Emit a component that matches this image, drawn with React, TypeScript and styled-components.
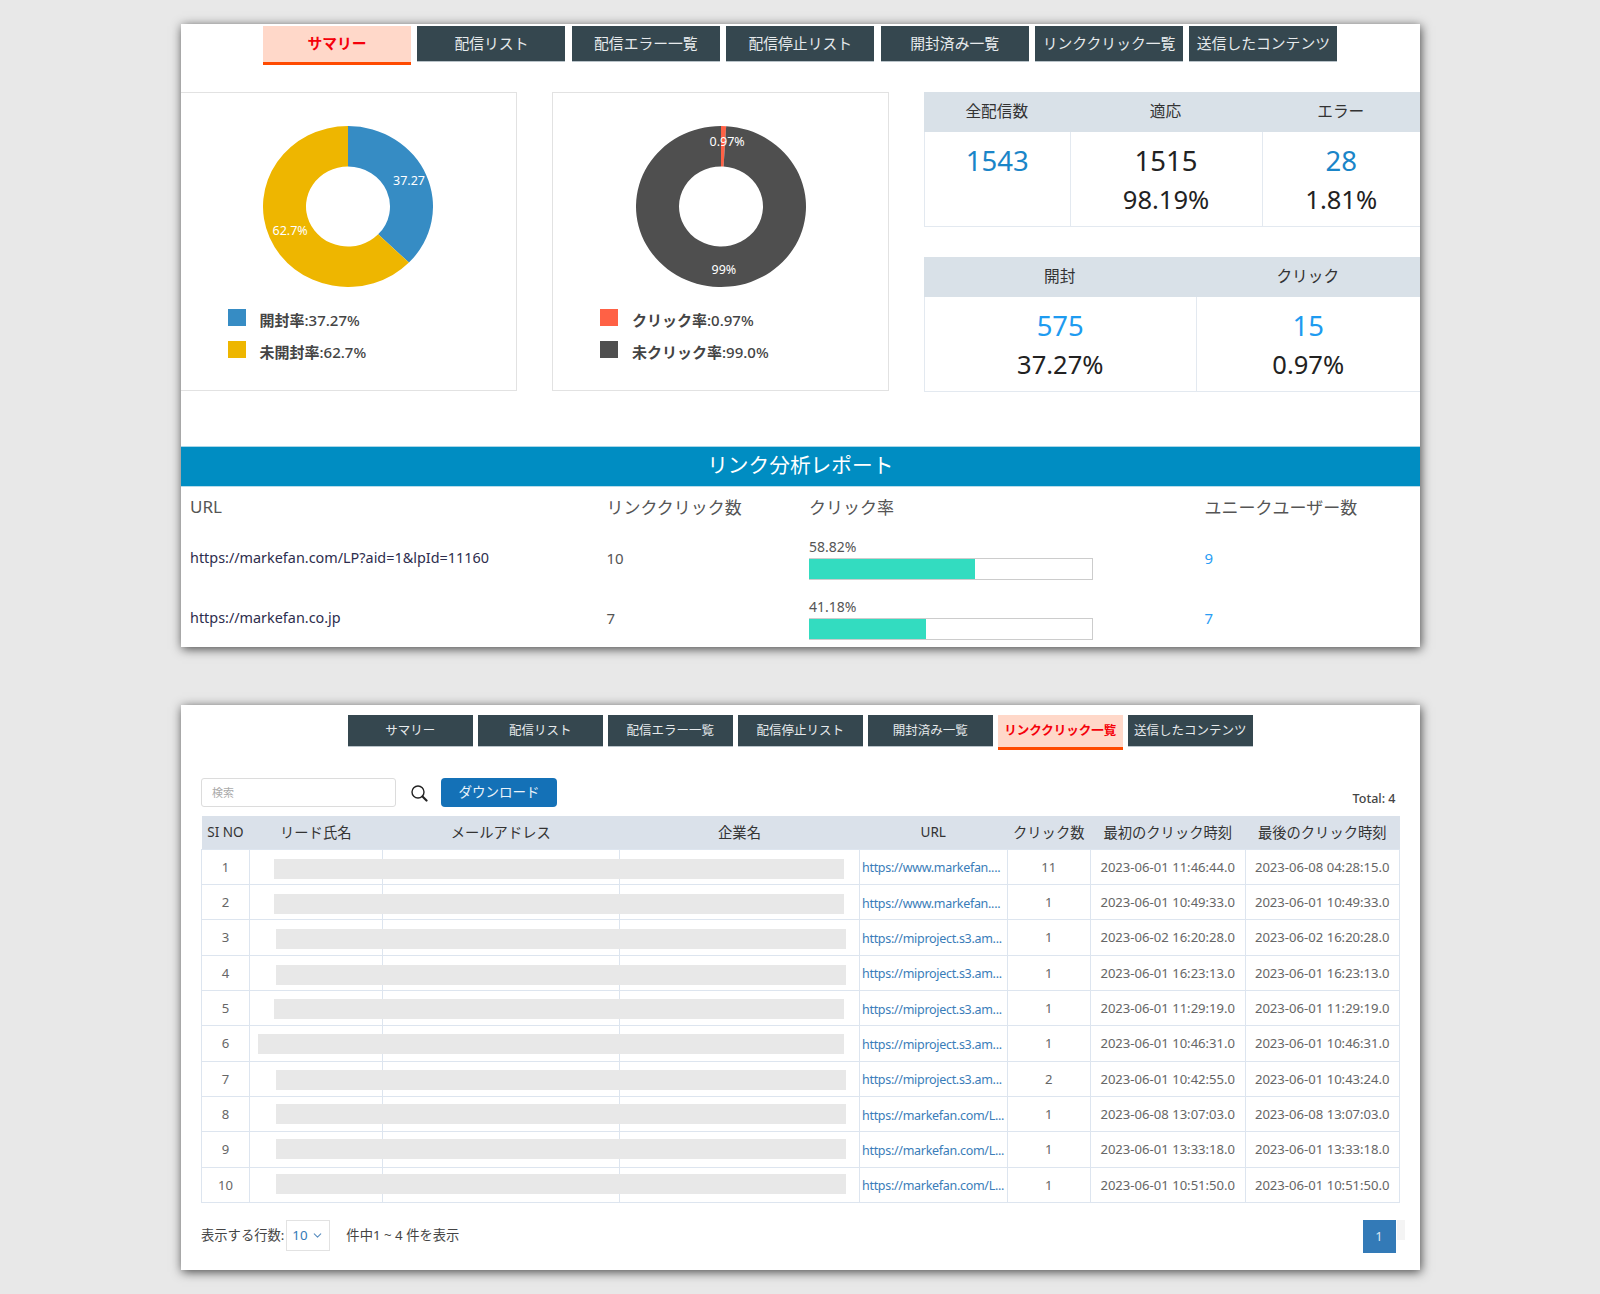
import React from "react";
import styled, { createGlobalStyle } from "styled-components";
import { ChevronDown } from "lucide-react";

const GlobalStyle = createGlobalStyle`
  html, body {
    margin: 0;
    padding: 0;
    background: #e8e8e8;
  }
  body {
    font-family: "Noto Sans", "Noto Sans CJK JP", sans-serif;
    color: #333;
  }
`;

const Page = styled.div`
  width: 1600px;
  height: 1294px;
  padding: 24px 0 0 180.5px;
  box-sizing: border-box;
  display: flex;
  flex-direction: column;
  gap: 58px;
  overflow: hidden;
`;

const Card = styled.section<{ $height: number }>`
  width: 1239.5px;
  height: ${({ $height }) => $height}px;
  background: #fff;
  box-shadow: 1px 2px 10px rgba(0, 0, 0, 0.7);
  overflow: hidden;
`;

const TabBar = styled.nav<{ $gap: number; $height: number; $top: number }>`
  display: flex;
  justify-content: center;
  align-items: flex-start;
  gap: ${({ $gap }) => $gap}px;
  height: ${({ $height }) => $height}px;
  padding-top: ${({ $top }) => $top}px;
  box-sizing: border-box;
`;

const Tab = styled.div<{ $active?: boolean; $width: number; $height: number; $size: number }>`
  width: ${({ $width }) => $width}px;
  height: ${({ $height, $active }) => ($active ? $height + 3 : $height)}px;
  box-sizing: border-box;
  padding-bottom: 3px;
  display: flex;
  align-items: center;
  justify-content: center;
  white-space: nowrap;
  font-size: ${({ $size }) => $size}px;
  font-weight: ${({ $active }) => ($active ? 700 : 400)};
  background: ${({ $active }) => ($active ? "#ffd8c9" : "#35474f")};
  color: ${({ $active }) => ($active ? "#f5000a" : "#e6eaec")};
  border-bottom: ${({ $active }) => ($active ? "3px solid #ff4a00" : "1px solid #b9c3c9")};
`;

const SummaryGrid = styled.div`
  display: grid;
  grid-template-columns: 336.5px 337px 1fr;
  column-gap: 35px;
  align-items: start;
`;

const ChartPanel = styled.div<{ $open?: boolean }>`
  height: 299px;
  box-sizing: border-box;
  border: 1px solid #e2e2e2;
  border-left: ${({ $open }) => ($open ? "0" : "1px solid #e2e2e2")};
  padding-top: 33px;
`;

const Donut = styled.svg`
  display: block;
  width: 170px;
  height: 161px;
  margin: 0 auto;
`;

const DonutLabel = styled.text`
  fill: #fff;
  font-size: 12.5px;
  font-family: "Noto Sans", sans-serif;
`;

const Legend = styled.ul`
  list-style: none;
  margin: 23px 0 0 47px;
  padding: 0;
  display: flex;
  flex-direction: column;
  gap: 14.6px;
`;

const LegendItem = styled.li`
  display: flex;
  align-items: center;
  height: 18px;
  gap: 14px;
  font-size: 15px;
  font-weight: 500;
  color: #444;
`;

const Swatch = styled.span<{ $color: string }>`
  width: 18px;
  height: 17px;
  background: ${({ $color }) => $color};
  margin-top: -3.5px;
`;

const LegendName = styled.b`
  font-weight: 700;
`;

const StatColumn = styled.div`
  display: flex;
  flex-direction: column;
  gap: 30px;
`;

const StatTable = styled.div<{ $cols: string }>`
  display: grid;
  grid-template-columns: ${({ $cols }) => $cols};
`;

const StatHead = styled.div`
  height: 40px;
  box-sizing: border-box;
  padding-bottom: 4px;
  display: flex;
  align-items: center;
  justify-content: center;
  background: #d9e1e8;
  font-size: 15.7px;
  color: #333;
`;

const StatCell = styled.div`
  height: 95px;
  box-sizing: border-box;
  padding-top: 10px;
  border-left: 1px solid #e3e9f0;
  border-bottom: 1px solid #e3e9f0;
  text-align: center;
  font-size: 25.5px;
  line-height: 38px;
  color: #222;
`;

const StatValue = styled.div<{ $color?: string }>`
  font-size: 27.5px;
  color: ${({ $color }) => $color || "#222"};
`;

const ReportBanner = styled.h2`
  margin: 54px 0 0;
  height: 41px;
  box-sizing: border-box;
  padding-bottom: 5px;
  display: flex;
  align-items: center;
  justify-content: center;
  background: #008dc2;
  border-top: 1px solid #a9d6e8;
  border-bottom: 1px solid #b7dcea;
  color: #fff;
  font-size: 20.7px;
  font-weight: 400;
`;

const LinkRow = styled.div<{ $height: number }>`
  display: grid;
  grid-template-columns: 416.5px 202.5px 395.5px 1fr;
  align-items: center;
  height: ${({ $height }) => $height}px;
  box-sizing: border-box;
  padding: 0 0 3px 9.5px;
  font-size: 15px;
  color: #555;
`;

const LinkHeadCell = styled.div`
  font-size: 17px;
  color: #555;
`;

const LinkUrl = styled.span`
  color: #2d2d4d;
  font-size: 14.4px;
`;

const UniqueCount = styled.span`
  color: #2a9df4;
`;

const RateBlock = styled.div`
  margin-top: 5px;
`;

const RateLabel = styled.div`
  font-size: 14px;
  line-height: 14px;
  margin-bottom: 4px;
  color: #555;
`;

const RateTrack = styled.div`
  width: 284px;
  height: 22px;
  box-sizing: border-box;
  border: 1px solid #ccc;
  border-left: 0;
  background: #fff;
`;

const RateFill = styled.div`
  height: 100%;
  background: #33dcc0;
`;

const ListBody = styled.div`
  padding: 0 20.5px;
`;

const Controls = styled.div`
  display: flex;
  align-items: center;
  height: 29px;
  margin-top: 28px;
`;

const SearchInput = styled.input`
  width: 195px;
  height: 29px;
  box-sizing: border-box;
  padding: 0 10px;
  border: 1px solid #dcdcdc;
  border-radius: 3px;
  font-family: inherit;
  font-size: 11px;
  outline: none;
  &::placeholder {
    color: #aaa;
  }
`;

const SearchIcon = styled.svg`
  width: 17px;
  height: 17px;
  margin: 2px 13px 0 15px;
`;

const DownloadButton = styled.button`
  width: 116px;
  height: 29px;
  padding: 0 0 3px;
  border: 0;
  border-radius: 4px;
  background: #1471b7;
  color: #e9f3fa;
  font-family: inherit;
  font-size: 13.5px;
`;

const Total = styled.div`
  margin: 12px 4px 0 auto;
  font-size: 12.5px;
  font-weight: 500;
  color: #444;
`;

const LeadTable = styled.table`
  width: 1198px;
  margin-top: 9px;
  table-layout: fixed;
  border-collapse: collapse;
`;

const HeadCell = styled.th<{ $size?: number }>`
  height: 33px;
  padding: 0 0 ${({ $size }) => ($size ? 0 : 2)}px;
  box-sizing: border-box;
  background: #dae1ea;
  font-size: ${({ $size }) => $size || 14.3}px;
  font-weight: 400;
  color: #333;
  white-space: nowrap;
`;

const Cell = styled.td`
  height: 35.35px;
  box-sizing: border-box;
  padding: 0;
  border: 1px solid #dde5ef;
  text-align: center;
  font-size: 13.1px;
  color: #666;
  white-space: nowrap;
`;

const NameCell = styled(Cell)`
  position: relative;
`;

const UrlCell = styled(Cell)`
  padding: 2px 0 0 2px;
  text-align: left;
  color: #3a7db9;
  font-size: 12.5px;
  letter-spacing: -0.3px;
`;

// redaction bar lying over the name, mail and company columns
const Mask = styled.div<{ $left: number; $top: number; $width: number }>`
  position: absolute;
  left: ${({ $left }) => $left}px;
  top: ${({ $top }) => $top}px;
  width: ${({ $width }) => $width}px;
  height: 20px;
  background: #e8e8e8;
`;

const Footer = styled.div`
  display: flex;
  align-items: flex-start;
  margin-top: 17px;
  font-size: 13.3px;
  color: #444;
`;

const FooterText = styled.span`
  line-height: 31px;
`;

const RowSelect = styled.div`
  width: 44px;
  height: 31px;
  box-sizing: border-box;
  margin: 0 16px 0 2px;
  padding: 0 5px;
  display: flex;
  align-items: center;
  justify-content: space-between;
  border: 1px solid #e2e2e2;
  color: #337ab7;
`;

const Pagination = styled.div`
  margin-left: auto;
  margin-right: -5px;
  display: flex;
  align-items: flex-start;
  gap: 1px;
`;

const PageButton = styled.div`
  width: 33px;
  height: 33px;
  display: flex;
  align-items: center;
  justify-content: center;
  background: #337ab7;
  color: #dbe9f5;
  font-size: 13px;
`;

const PageGhost = styled.div`
  width: 8px;
  height: 20px;
  background: #f4f4f4;
`;

const polar = (cx: number, cy: number, rx: number, ry: number, pct: number) => {
  const a = (pct / 100) * Math.PI * 2;
  return [cx + rx * Math.sin(a), cy - ry * Math.cos(a)];
};

const ringSlice = (from: number, to: number) => {
  const [x1, y1] = polar(85, 80.5, 85, 80.5, from);
  const [x2, y2] = polar(85, 80.5, 85, 80.5, to);
  const [x3, y3] = polar(85, 80.5, 42, 40, to);
  const [x4, y4] = polar(85, 80.5, 42, 40, from);
  const large = to - from > 50 ? 1 : 0;
  return `M${x1} ${y1}A85 80.5 0 ${large} 1 ${x2} ${y2}L${x3} ${y3}A42 40 0 ${large} 0 ${x4} ${y4}Z`;
};

const summaryTabs = ["サマリー", "配信リスト", "配信エラー一覧", "配信停止リスト", "開封済み一覧", "リンククリック一覧", "送信したコンテンツ"];

const leadRows = [
  { url: "https://www.markefan....", clicks: 11, first: "2023-06-01 11:46:44.0", last: "2023-06-08 04:28:15.0", left: 24, top: 9, width: 570 },
  { url: "https://www.markefan....", clicks: 1, first: "2023-06-01 10:49:33.0", last: "2023-06-01 10:49:33.0", left: 24, top: 9, width: 570 },
  { url: "https://miproject.s3.am...", clicks: 1, first: "2023-06-02 16:20:28.0", last: "2023-06-02 16:20:28.0", left: 26, top: 9, width: 570 },
  { url: "https://miproject.s3.am...", clicks: 1, first: "2023-06-01 16:23:13.0", last: "2023-06-01 16:23:13.0", left: 26, top: 9, width: 570 },
  { url: "https://miproject.s3.am...", clicks: 1, first: "2023-06-01 11:29:19.0", last: "2023-06-01 11:29:19.0", left: 24, top: 8, width: 570 },
  { url: "https://miproject.s3.am...", clicks: 1, first: "2023-06-01 10:46:31.0", last: "2023-06-01 10:46:31.0", left: 8, top: 8, width: 586 },
  { url: "https://miproject.s3.am...", clicks: 2, first: "2023-06-01 10:42:55.0", last: "2023-06-01 10:43:24.0", left: 26, top: 8, width: 570 },
  { url: "https://markefan.com/L...", clicks: 1, first: "2023-06-08 13:07:03.0", last: "2023-06-08 13:07:03.0", left: 26, top: 7, width: 570 },
  { url: "https://markefan.com/L...", clicks: 1, first: "2023-06-01 13:33:18.0", last: "2023-06-01 13:33:18.0", left: 26, top: 7, width: 570 },
  { url: "https://markefan.com/L...", clicks: 1, first: "2023-06-01 10:51:50.0", last: "2023-06-01 10:51:50.0", left: 26, top: 6, width: 570 },
];

const linkRows = [
  { url: "https://markefan.com/LP?aid=1&lpId=11160", clicks: 10, rate: 58.82, unique: 9 },
  { url: "https://markefan.co.jp", clicks: 7, rate: 41.18, unique: 7 },
];

const App: React.FC = () => {
  return (
    <Page>
      <GlobalStyle />
      <Card $height={623}>
        <TabBar $gap={6.4} $height={68} $top={2}>
          {summaryTabs.map((name, i) => (
            <Tab key={name} $active={i === 0} $width={148} $height={36} $size={14.8}>
              {name}
            </Tab>
          ))}
        </TabBar>
        <SummaryGrid>
          <ChartPanel $open>
            <Donut viewBox="0 0 170 161">
              <path d={ringSlice(0, 37.27)} fill="#368cc4" />
              <path d={ringSlice(37.27, 100)} fill="#eeb600" />
              <DonutLabel x="130" y="59">37.27</DonutLabel>
              <DonutLabel x="9.5" y="109">62.7%</DonutLabel>
            </Donut>
            <Legend>
              <LegendItem>
                <Swatch $color="#368cc4" />
                <span><LegendName>開封率</LegendName>:37.27%</span>
              </LegendItem>
              <LegendItem>
                <Swatch $color="#eeb600" />
                <span><LegendName>未開封率</LegendName>:62.7%</span>
              </LegendItem>
            </Legend>
          </ChartPanel>
          <ChartPanel>
            <Donut viewBox="0 0 170 161">
              <path d={ringSlice(0, 0.97)} fill="#ff6145" />
              <path d={ringSlice(0.97, 100)} fill="#4f4f4f" />
              <DonutLabel x="73.5" y="19.5">0.97%</DonutLabel>
              <DonutLabel x="75.5" y="148">99%</DonutLabel>
            </Donut>
            <Legend>
              <LegendItem>
                <Swatch $color="#ff6145" />
                <span><LegendName>クリック率</LegendName>:0.97%</span>
              </LegendItem>
              <LegendItem>
                <Swatch $color="#4f4f4f" />
                <span><LegendName>未クリック率</LegendName>:99.0%</span>
              </LegendItem>
            </Legend>
          </ChartPanel>
          <StatColumn>
            <StatTable $cols="145.5px 192px 1fr">
              <StatHead>全配信数</StatHead>
              <StatHead>適応</StatHead>
              <StatHead>エラー</StatHead>
              <StatCell><StatValue $color="#1a85c8">1543</StatValue></StatCell>
              <StatCell><StatValue>1515</StatValue>98.19%</StatCell>
              <StatCell><StatValue $color="#1a85c8">28</StatValue>1.81%</StatCell>
            </StatTable>
            <StatTable $cols="271.5px 1fr">
              <StatHead>開封</StatHead>
              <StatHead>クリック</StatHead>
              <StatCell><StatValue $color="#1e9bf0">575</StatValue>37.27%</StatCell>
              <StatCell><StatValue $color="#1e9bf0">15</StatValue>0.97%</StatCell>
            </StatTable>
          </StatColumn>
        </SummaryGrid>
        <ReportBanner>リンク分析レポート</ReportBanner>
        <LinkRow $height={42}>
          <LinkHeadCell>URL</LinkHeadCell>
          <LinkHeadCell>リンククリック数</LinkHeadCell>
          <LinkHeadCell>クリック率</LinkHeadCell>
          <LinkHeadCell>ユニークユーザー数</LinkHeadCell>
        </LinkRow>
        {linkRows.map((row) => (
          <LinkRow key={row.url} $height={60}>
            <LinkUrl>{row.url}</LinkUrl>
            <span>{row.clicks}</span>
            <RateBlock>
              <RateLabel>{row.rate}%</RateLabel>
              <RateTrack>
                <RateFill style={{ width: `${row.rate}%` }} />
              </RateTrack>
            </RateBlock>
            <UniqueCount>{row.unique}</UniqueCount>
          </LinkRow>
        ))}
      </Card>

      <Card $height={565}>
        <TabBar $gap={5.5} $height={45} $top={10}>
          {summaryTabs.map((name, i) => (
            <Tab key={name} $active={i === 5} $width={124.5} $height={32} $size={12.5}>
              {name}
            </Tab>
          ))}
        </TabBar>
        <ListBody>
          <Controls>
            <SearchInput placeholder="検索" />
            <SearchIcon viewBox="0 0 17 17">
              <circle cx="7" cy="7" r="6" fill="none" stroke="#222" strokeWidth="1.4" />
              <path d="M11.5 11.5L15.5 15.5" stroke="#222" strokeWidth="2.2" strokeLinecap="round" />
            </SearchIcon>
            <DownloadButton>ダウンロード</DownloadButton>
            <Total>Total: 4</Total>
          </Controls>
          <LeadTable>
            <colgroup>
              <col width="48" />
              <col width="132.5" />
              <col width="237.5" />
              <col width="240" />
              <col width="147.5" />
              <col width="83.5" />
              <col width="154.5" />
              <col width="154.5" />
            </colgroup>
            <thead>
              <tr>
                <HeadCell $size={13.5}>SI NO</HeadCell>
                <HeadCell>リード氏名</HeadCell>
                <HeadCell>メールアドレス</HeadCell>
                <HeadCell>企業名</HeadCell>
                <HeadCell $size={13.5}>URL</HeadCell>
                <HeadCell>クリック数</HeadCell>
                <HeadCell>最初のクリック時刻</HeadCell>
                <HeadCell>最後のクリック時刻</HeadCell>
              </tr>
            </thead>
            <tbody>
              {leadRows.map((row, i) => (
                <tr key={i}>
                  <Cell>{i + 1}</Cell>
                  <NameCell>
                    <Mask $left={row.left} $top={row.top} $width={row.width} />
                  </NameCell>
                  <Cell />
                  <Cell />
                  <UrlCell>{row.url}</UrlCell>
                  <Cell>{row.clicks}</Cell>
                  <Cell>{row.first}</Cell>
                  <Cell>{row.last}</Cell>
                </tr>
              ))}
            </tbody>
          </LeadTable>
          <Footer>
            <FooterText>表示する行数:</FooterText>
            <RowSelect>
              10
              <ChevronDown size={13} color="#5b8fc0" />
            </RowSelect>
            <FooterText>件中1 ~ 4 件を表示</FooterText>
            <Pagination>
              <PageButton>1</PageButton>
              <PageGhost />
            </Pagination>
          </Footer>
        </ListBody>
      </Card>
    </Page>
  );
};

export default App;
